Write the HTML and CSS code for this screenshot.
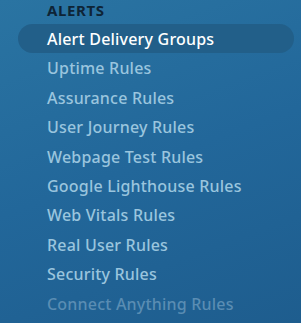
FILE: index.html
```html
<!DOCTYPE html>
<html lang="en">
<head>
    <meta charset="UTF-8">
    <meta name="viewport" content="width=device-width, initial-scale=1.0">
    <title>Alerts</title>
    <link rel="stylesheet" href="styles.css">
</head>
<body>
    <div class="nav">
        <div class="nav-title">ALERTS</div>
        <ul class="nav-list">
            <li class="nav-item active">Alert Delivery Groups</li>
            <li class="nav-item">Uptime Rules</li>
            <li class="nav-item">Assurance Rules</li>
            <li class="nav-item">User Journey Rules</li>
            <li class="nav-item">Webpage Test Rules</li>
            <li class="nav-item">Google Lighthouse Rules</li>
            <li class="nav-item">Web Vitals Rules</li>
            <li class="nav-item">Real User Rules</li>
            <li class="nav-item">Security Rules</li>
            <li class="nav-item disabled">Connect Anything Rules</li>
        </ul>
    </div>
</body>
</html>
```

FILE: styles.css
```css
* { margin: 0; padding: 0; box-sizing: border-box; font-family: "Noto Sans", "Open Sans", sans-serif; }
body { width: 301px; height: 323px; overflow: hidden; background: linear-gradient(160deg, #2a74a2 0%, #22679a 50%, #1e5d8e 100%); }

/* Nav */
.nav { padding-top: 2px; }
.nav-title { padding-left: 47px; height: 17px; line-height: 17px; font-size: 15px; font-weight: 700; letter-spacing: 0.6px; color: #0e2436; }
.nav-list { list-style: none; margin-top: 5px; }
.nav-item { height: 29.4px; line-height: 27.4px; padding-top: 2px; margin: 0 7px 0 18px; padding-left: 29px; border-radius: 15px; font-size: 16px; font-weight: 500; letter-spacing: 0.2px; color: #9ac5de; white-space: nowrap; }
.nav-item.active { background: #225f89; color: #ffffff; }
.nav-item.disabled { color: #5a8db3; }
```
